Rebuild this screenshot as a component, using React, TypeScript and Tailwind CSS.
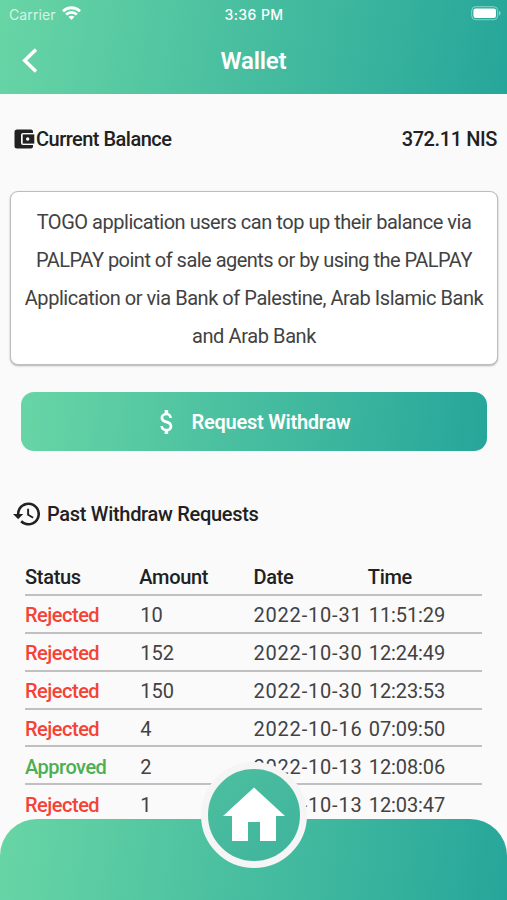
const rows = [
  ["Rejected", "10", "2022-10-31", "11:51:29"],
  ["Rejected", "152", "2022-10-30", "12:24:49"],
  ["Rejected", "150", "2022-10-30", "12:23:53"],
  ["Rejected", "4", "2022-10-16", "07:09:50"],
  ["Approved", "2", "2022-10-13", "12:08:06"],
  ["Rejected", "1", "2022-10-13", "12:03:47"],
];

function StatusBar() {
  return (
    <div className="grid h-7 grid-cols-3 items-center pl-[9px] pr-[6px] font-['Inter',sans-serif] text-[13px]">
      <div className="flex items-center gap-[6px] text-white/75">
        <span className="text-[14px] tracking-[0.1px]">Carrier</span>
        <svg className="-mt-[2px]" width="19" height="15" viewBox="0 0 19 15" fill="none" stroke="white" strokeWidth="2.8">
          <path d="M1 5.2C5.8.6 13.2.6 18 5.2" />
          <path d="M4.1 8.6c3.1-3 7.7-3 10.8 0" />
          <path d="M6.5 10.7c1.7-1.4 4.3-1.4 6 0L9.5 14z" fill="white" stroke="none" />
        </svg>
      </div>
      <span className="-ml-[2px] text-center text-[14px] font-medium tracking-[0.4px] text-white">3:36 PM</span>
      <svg className="-mt-[2px] justify-self-end" width="30" height="15" viewBox="0 0 30 15">
        <rect x=".7" y=".7" width="26" height="13" rx="4" fill="none" stroke="white" strokeOpacity=".45" />
        <rect x="2.4" y="2.4" width="22.6" height="9.6" rx="2.2" fill="white" />
        <path d="M28 5v4.5c2-.7 2-3.8 0-4.5" fill="white" fillOpacity=".5" />
      </svg>
    </div>
  );
}

export default function App() {
  return (
    <div className="relative flex h-[900px] w-[507px] flex-col overflow-hidden bg-[#fafafa] font-['Roboto',sans-serif] text-[#212121]">
      <header className="h-[94px] shrink-0 bg-[linear-gradient(100deg,#68d5a5,#26a69a)] text-white">
        <StatusBar />
        <div className="grid h-[64px] grid-cols-3 items-center">
          <svg className="ml-[21px]" width="18" height="26" viewBox="0 0 18 26" fill="none" stroke="white" strokeWidth="3.5">
            <path d="M15 2.5 3.7 13.5 15 24.5" />
          </svg>
          <h1 className="pt-[2px] text-center text-[24px] font-semibold tracking-[-0.2px]">Wallet</h1>
        </div>
      </header>

      <section className="flex h-[90px] shrink-0 items-center justify-between pl-[14px] pr-[10px] text-[20px] font-medium">
        <div className="flex items-center gap-[1px]">
          <svg width="21" height="20" viewBox="0 0 21 20">
            <path d="M3 .5h14q2 0 2 2V4H9Q7 4 7 6v8q0 2 2 2h10v1.5q0 2-2 2H3q-2.5 0-2.5-2.5V3Q.5.5 3 .5z" fill="#212121" />
            <rect x="8.7" y="5.4" width="11.6" height="9.2" fill="#212121" />
            <circle cx="13.7" cy="10" r="1.7" fill="white" />
          </svg>
          <span className="tracking-[-0.52px]">Current Balance</span>
        </div>
        <span className="tracking-[-0.4px]">372.11 NIS</span>
      </section>

      <div className="ml-[10px] mr-[9px] mt-[7px] flex h-[174px] shrink-0 flex-col whitespace-nowrap rounded-[8px] border border-[#bdbdbd] bg-white pt-[11px] text-center text-[20px] leading-[38px] text-[#424242] shadow-[0_1px_2px_rgba(0,0,0,.3)]">
        <span className="tracking-[-0.47px]">TOGO application users can top up their balance via</span>
        <span className="tracking-[-0.52px]">PALPAY point of sale agents or by using the PALPAY</span>
        <span className="tracking-[-0.45px]">Application or via Bank of Palestine, Arab Islamic Bank</span>
        <span className="tracking-[-0.4px]">and Arab Bank</span>
      </div>

      <button className="ml-[21px] mr-[20px] mt-[27px] flex h-[59px] shrink-0 items-center justify-center gap-[18px] rounded-[13px] bg-[linear-gradient(97deg,#68d5a5,#26a69a)] pl-[2px] text-[20px] font-semibold text-white">
        <svg width="14" height="24" viewBox="6 3 12 18" preserveAspectRatio="none" fill="white">
          <path d="M11.8 10.9c-2.27-.59-3-1.2-3-2.15 0-1.09 1.01-1.85 2.7-1.85 1.78 0 2.44.85 2.5 2.1h2.21c-.07-1.72-1.12-3.3-3.21-3.81V3h-3v2.16c-1.94.42-3.5 1.68-3.5 3.61 0 2.31 1.91 3.46 4.7 4.13 2.5.6 3 1.48 3 2.41 0 .69-.49 1.79-2.7 1.79-2.06 0-2.87-.92-2.98-2.1h-2.2c.12 2.19 1.76 3.42 3.68 3.83V21h3v-2.15c1.95-.37 3.5-1.5 3.5-3.55 0-2.84-2.43-3.81-4.7-4.4z" />
        </svg>
        <span className="tracking-[-0.25px]">Request Withdraw</span>
      </button>

      <div className="mt-[43px] flex h-10 shrink-0 items-center gap-[7px] pl-[13px] text-[20px] font-medium">
        <svg width="27" height="24" viewBox="1 3 21 18" fill="#212121">
          <path d="M13 3a9 9 0 0 0-9 9H1l3.89 3.89.07.14L9 12H6a7 7 0 1 1 2.06 4.94l-1.42 1.42A9 9 0 1 0 13 3zm-1 5v5l4.28 2.54.72-1.21-3.5-2.08V8H12z" />
        </svg>
        <h2 className="tracking-[-0.3px]">Past Withdraw Requests</h2>
      </div>

      <div className="mx-[25px] mt-[23px] text-[20px]">
        <div className="grid h-[39px] grid-cols-4 items-center border-b-2 border-[#c0c0c0] pt-[2px] font-medium tracking-[-0.3px]">
          <span>Status</span>
          <span>Amount</span>
          <span>Date</span>
          <span>Time</span>
        </div>
        {rows.map(([status, amount, date, time], i) => (
          <div key={i} className="grid h-[37.85px] grid-cols-4 items-center whitespace-nowrap border-b-2 border-[#c0c0c0] pt-[3px] text-[#424242]">
            <span className={status === "Approved" ? "font-medium tracking-[-0.5px] text-[#4caf50]" : "font-medium tracking-[-0.5px] text-[#f44336]"}>{status}</span>
            <span className="pl-px">{amount}</span>
            <span className="tracking-[0.8px]">{date}</span>
            <span className="pl-px tracking-[-0.1px]">{time}</span>
          </div>
        ))}
      </div>

      <nav className="absolute inset-x-0 bottom-0 flex h-[81px] justify-center rounded-t-[37px] bg-[linear-gradient(99deg,#68d5a5,#26a69a)]">
        <button className="-mt-[57px] flex size-[106px] shrink-0 items-center justify-center rounded-full border-[7px] border-[#f5f5f5] bg-[linear-gradient(135deg,#4dbf9f,#3fb49d)]">
          <svg width="64" height="56" viewBox="0 0 64 56" fill="white">
            <path d="M32 .5 63 29h-9v25H38V35H26v19H10V29H1z" />
          </svg>
        </button>
      </nav>
    </div>
  );
}
